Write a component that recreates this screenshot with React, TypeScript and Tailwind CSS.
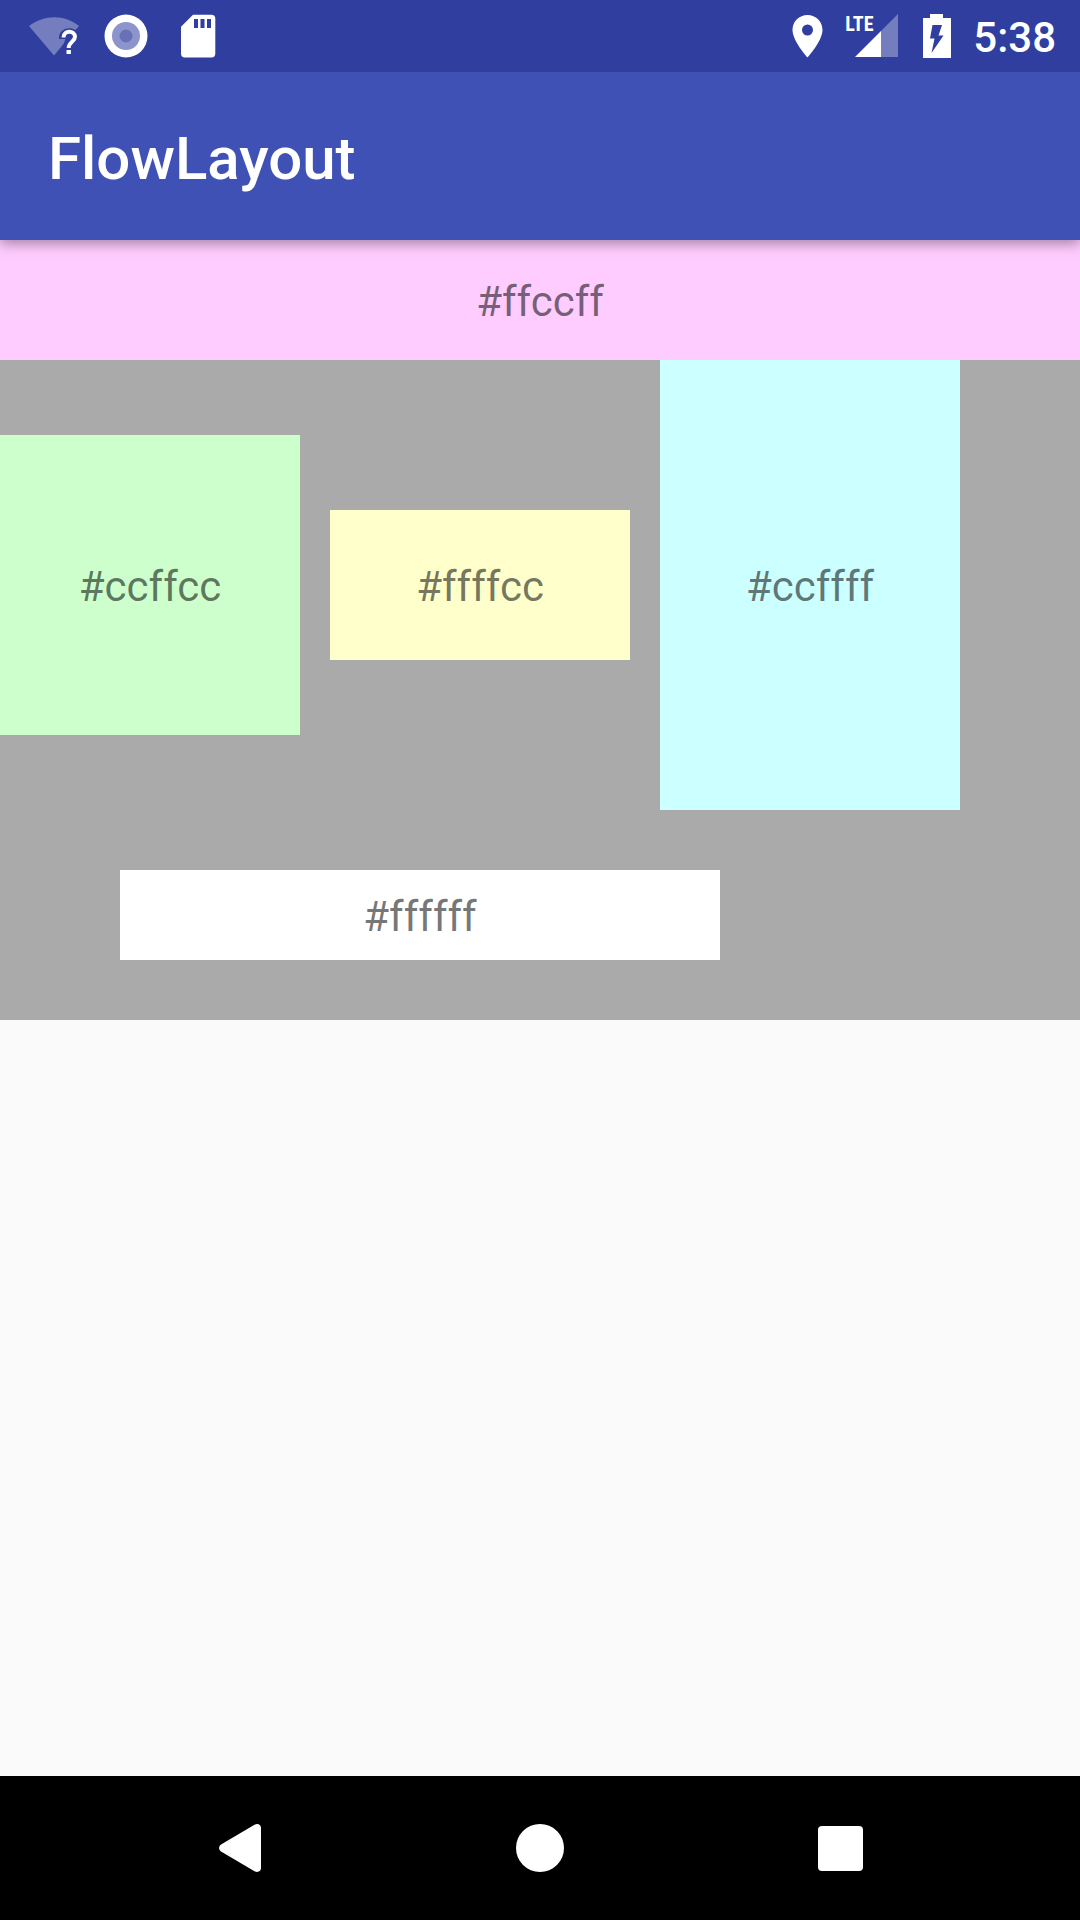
import type { ReactNode } from "react";

function WifiUnknownIcon() {
  return (
    <svg width="52" height="44" viewBox="0 0 52 44" aria-hidden="true">
      <path d="M1 12C16 .2 37 .2 51 12L47.500 16C41 12 32 15 31 22.500V25H37.500L35.500 30L26 41.500Z" fill="#fff" fillOpacity=".33" />
      <path d="M35.500 23.500C35.500 16 47 16 47 22.800C47 27.500 40.700 28 40.700 34" fill="none" stroke="#fff" strokeWidth="4" />
      <rect x="38.500" y="36" width="4.400" height="4" fill="#fff" />
    </svg>
  );
}

function RecordIcon() {
  return (
    <svg width="52" height="44" viewBox="0 0 52 44" aria-hidden="true">
      <circle cx="26" cy="22" r="21.500" fill="#fff" />
      <circle cx="26" cy="22" r="14" fill="#8c95cb" />
      <circle cx="26" cy="22" r="6.500" fill="#6871b7" />
    </svg>
  );
}

function SdCardIcon() {
  return (
    <svg width="52" height="44" viewBox="0 0 52 44" aria-hidden="true">
      <path d="M21 .7H39.300A4 4 0 0 1 43.300 4.700V39.500A4 4 0 0 1 39.300 43.500H13A4 4 0 0 1 9 39.500V12.700Z" fill="#fff" />
      <path d="M22 5h4v9h-4zM28.500 5h4v9h-4zM35 5h4v9h-4z" fill="#303f9f" />
    </svg>
  );
}

function LocationIcon() {
  return (
    <svg width="34" height="44" viewBox="-1 0 34 44" aria-hidden="true">
      <path d="M17.500 1C9.200 1 2.500 7.600 2.500 16C2.500 27 17.500 43.500 17.500 43.500S32.500 27 32.500 16C32.500 7.600 25.800 1 17.500 1ZM17.500 21.500A5.500 5.500 0 1 1 17.500 10.500A5.500 5.500 0 0 1 17.500 21.500Z" fill="#fff" />
    </svg>
  );
}

function SignalIcon() {
  return (
    <div className="relative h-11 w-14">
      <svg width="56" height="44" viewBox="-1 0 56 44" aria-hidden="true">
        <path d="M37 17L54 0V43H37Z" fill="#fff" fillOpacity=".33" />
        <path d="M11 43L37 17V43Z" fill="#fff" />
      </svg>
      <span className="absolute top-0 left-0.5 font-['Roboto_Condensed','Liberation_Sans_Narrow','Roboto',sans-serif] text-[20px] leading-5 font-bold">LTE</span>
    </div>
  );
}

function BatteryIcon() {
  return (
    <svg width="34" height="44" viewBox="-1 0 34 44" aria-hidden="true">
      <path d="M10 0H23V4H31V44H3V4H10Z" fill="#fff" />
      <path d="M12.500 11H22L18.500 21.500H23.500L11.500 39L14.500 24.500H10Z" fill="#303f9f" />
    </svg>
  );
}

function Box({ className, children }: { className: string; children: ReactNode }) {
  return (
    <div className={`flex items-center justify-center pt-1 text-[42px] leading-[48px] text-black/54 ${className}`}>
      {children}
    </div>
  );
}

export default function App() {
  return (
    <div className="flex min-h-screen flex-col bg-[#fafafa] font-['Roboto',sans-serif] [font-variant-ligatures:none]">
      <div className="relative z-20 flex h-[72px] items-center justify-between bg-[#303f9f] pr-6 pl-7 text-white">
        <div className="flex items-center gap-5">
          <WifiUnknownIcon />
          <RecordIcon />
          <SdCardIcon />
        </div>
        <div className="flex items-center gap-5">
          <LocationIcon />
          <SignalIcon />
          <BatteryIcon />
          <time className="pt-1 text-[42px] leading-[48px] font-medium">5:38</time>
        </div>
      </div>

      <header className="relative z-10 flex h-[168px] items-center bg-[#3f51b5] px-12 pt-1.5 text-white shadow-[0_4px_12px_rgba(0,0,0,0.35)]">
        <h1 className="text-[60px] leading-[72px] font-medium">FlowLayout</h1>
      </header>

      <main className="flex-1">
        <div className="bg-[#aaaaaa] pb-[60px]">
          <Box className="h-[120px] bg-[#ffccff]">#ffccff</Box>
          <div className="flex flex-wrap items-center gap-[30px]">
            <Box className="h-[300px] w-[300px] bg-[#ccffcc]">#ccffcc</Box>
            <Box className="h-[150px] w-[300px] bg-[#ffffcc]">#ffffcc</Box>
            <Box className="h-[450px] w-[300px] bg-[#ccffff]">#ccffff</Box>
          </div>
          <Box className="mt-[60px] ml-[120px] h-[90px] w-[600px] bg-white">#ffffff</Box>
        </div>
      </main>

      <nav className="flex h-36 items-center bg-black px-[90px]">
        <button type="button" aria-label="Back" className="flex h-full flex-1 items-center justify-center">
          <svg width="48" height="48" viewBox="0 0 48 48" aria-hidden="true">
            <path d="M38.500 .8C41.500 -.8 45 .5 45 4V44C45 47.500 41.500 48.800 38.500 47.200L5 27.500C2.500 26 2.500 22 5 20.500Z" fill="#fff" />
          </svg>
        </button>
        <button type="button" aria-label="Home" className="flex h-full flex-1 items-center justify-center">
          <span className="size-12 rounded-full bg-white" />
        </button>
        <button type="button" aria-label="Overview" className="flex h-full flex-1 items-center justify-center">
          <span className="size-[45px] rounded-[4px] bg-white" />
        </button>
      </nav>
    </div>
  );
}
